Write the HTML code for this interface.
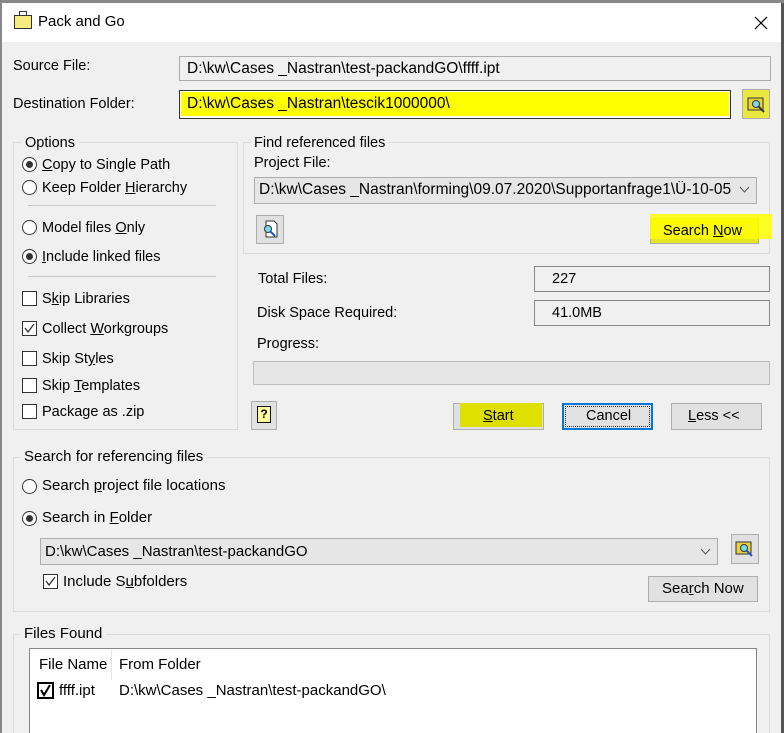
<!DOCTYPE html>
<html><head><meta charset="utf-8"><style>
*{box-sizing:border-box;margin:0;padding:0}
html,body{width:784px;height:733px;overflow:hidden}
body{background:#f0f0f0;font-family:"Liberation Sans",sans-serif;font-size:14.5px;color:#000;position:relative}
.a{position:absolute;white-space:nowrap}
.t{position:absolute;white-space:nowrap;line-height:18px}
.box{position:absolute;border:1px solid #adadad;background:#f0f0f0}
.grp{position:absolute;border:1px solid #dcdcdc}
.btn{position:absolute;border:1px solid #adadad;background:#e1e1e1;text-align:center;line-height:24px}
.rad{position:absolute;width:15px;height:15px;border:1px solid #333;border-radius:50%;background:#fff}
.rad.on::after{content:"";position:absolute;left:3px;top:3px;width:7px;height:7px;border-radius:50%;background:#333}
.chk{position:absolute;width:15px;height:15px;border:1px solid #333;background:#fff}
.sep{position:absolute;height:1px;background:#c8c8c8}
.c{font-size:15px}
.p{font-size:15.5px}
u{text-decoration:underline}
</style></head><body>
<div class="a" style="left:0;top:0;width:784px;height:42px;background:#fff"></div>
<div class="a" style="left:0;top:0;width:2px;height:733px;background:#888"></div>
<div class="a" style="left:781px;top:0;width:3px;height:733px;background:#555"></div>
<div class="a" style="left:0;top:0;width:784px;height:3px;background:#888"></div>
<div class="a" style="left:14px;top:15px;width:18px;height:14px;background:#f5ec80;border:1px solid #333"></div>
<div class="a" style="left:19px;top:11px;width:8px;height:5px;border:1px solid #333;border-bottom:none"></div>
<div class="t" style="left:38px;top:13px;font-size:15px">Pack and Go</div>
<svg class="a" style="left:754px;top:16px" width="14" height="14"><path d="M1 1L13 13M13 1L1 13" stroke="#000" stroke-width="1.2"/></svg>

<div class="t" style="left:13px;top:57px">Source File:</div>
<div class="box" style="left:179px;top:56px;width:592px;height:25px"></div>
<div class="t p" style="left:187px;top:60px">D:\kw\Cases _Nastran\test-packandGO\ffff.ipt</div>
<div class="t" style="left:13px;top:95px">Destination Folder:</div>
<div class="box" style="left:179px;top:90px;width:552px;height:29px;background:#fff;border-color:#333"></div>
<div class="a" style="left:181px;top:92px;width:548px;height:24px;background:#ffff00"></div>
<div class="t p" style="left:187px;top:95px">D:\kw\Cases _Nastran\tescik1000000\</div>
<div class="btn" style="left:742px;top:89px;width:28px;height:30px;background:#e8e840"></div>
<svg class="a" style="left:747px;top:95px" width="20" height="18"><rect x="1" y="3" width="15" height="12" fill="#e8d040" stroke="#333"/><circle cx="9" cy="9" r="3.5" fill="#7de" stroke="#333"/><path d="M11 11L17 17" stroke="#333" stroke-width="2"/></svg>

<div class="grp" style="left:13px;top:142px;width:225px;height:288px"></div>
<div class="t" style="left:22px;top:134px;background:#f0f0f0;padding:0 3px">Options</div>
<div class="rad on" style="left:22px;top:157px"></div><div class="t" style="left:42px;top:156px"><u>C</u>opy to Single Path</div>
<div class="rad" style="left:22px;top:180px"></div><div class="t" style="left:42px;top:179px">Keep Folder <u>H</u>ierarchy</div>
<div class="sep" style="left:28px;top:205px;width:188px"></div>
<div class="rad" style="left:22px;top:220px"></div><div class="t" style="left:42px;top:219px">Model files <u>O</u>nly</div>
<div class="rad on" style="left:22px;top:249px"></div><div class="t" style="left:42px;top:248px"><u>I</u>nclude linked files</div>
<div class="sep" style="left:28px;top:276px;width:188px"></div>
<div class="chk" style="left:22px;top:291px"></div><div class="t" style="left:42px;top:290px">S<u>k</u>ip Libraries</div>
<div class="chk" style="left:22px;top:321px"><svg width="13" height="13" style="position:absolute;left:0;top:0"><path d="M2 6L5 10L11 2" stroke="#333" fill="none" stroke-width="1.3"/></svg></div><div class="t" style="left:42px;top:320px">Collect <u>W</u>orkgroups</div>
<div class="chk" style="left:22px;top:351px"></div><div class="t" style="left:42px;top:350px">Skip St<u>y</u>les</div>
<div class="chk" style="left:22px;top:378px"></div><div class="t" style="left:42px;top:377px">Skip <u>T</u>emplates</div>
<div class="chk" style="left:22px;top:404px"></div><div class="t" style="left:42px;top:403px">Package as .zip</div>

<div class="grp" style="left:243px;top:142px;width:527px;height:112px"></div>
<div class="t" style="left:251px;top:134px;background:#f0f0f0;padding:0 3px">Find referenced files</div>
<div class="t" style="left:254px;top:154px">Project File:</div>
<div class="box" style="left:254px;top:177px;width:503px;height:27px;background:#e6e6e6"></div>
<div class="a p" style="left:259px;top:181px;width:497px;overflow:hidden;line-height:18px">D:\kw\Cases _Nastran\forming\09.07.2020\Supportanfrage1\Ü-10-05</div>
<div class="a" style="left:733px;top:179px;width:23px;height:23px;background:#e6e6e6"></div>
<svg class="a" style="left:739px;top:186px" width="11" height="8"><path d="M1 1L5.5 6L10 1" stroke="#555" fill="none"/></svg>
<div class="btn" style="left:256px;top:215px;width:28px;height:29px"></div>
<svg class="a" style="left:260px;top:219px" width="20" height="20"><path d="M6 2H14L17 5V18H6Z" fill="#fff" stroke="#333"/><circle cx="8" cy="10" r="3.5" fill="#7de" stroke="#333"/><path d="M10 12L15 17" stroke="#2255cc" stroke-width="2"/></svg>
<div class="btn" style="left:650px;top:218px;width:109px;height:26px;background:#e5e520"></div>
<div class="a" style="left:650px;top:214px;width:122px;height:25px;background:#ffff00;opacity:.85"></div>
<div class="t" style="left:663px;top:222px">Search <u>N</u>ow</div>

<div class="t" style="left:258px;top:270px">Total Files:</div>
<div class="box" style="left:534px;top:266px;width:236px;height:26px;border-color:#888"></div>
<div class="t" style="left:552px;top:270px">227</div>
<div class="t" style="left:257px;top:304px">Disk Space Required:</div>
<div class="box" style="left:534px;top:300px;width:236px;height:26px;border-color:#888"></div>
<div class="t" style="left:552px;top:304px">41.0MB</div>
<div class="t" style="left:257px;top:335px">Progress:</div>
<div class="box" style="left:253px;top:361px;width:517px;height:24px;background:#e6e6e6;border-color:#bcbcbc"></div>

<div class="btn" style="left:251px;top:401px;width:26px;height:29px"></div>
<div class="a" style="left:257px;top:406px;width:14px;height:17px;background:#ffffa0;border:1.5px solid #111;font-size:12px;font-weight:bold;text-align:center;line-height:14px">?</div>
<div class="btn" style="left:453px;top:403px;width:91px;height:27px;background:#e0e0e0"></div>
<div class="a" style="left:460px;top:403px;width:82px;height:24px;background:#e0e000"></div>
<div class="t" style="left:483px;top:407px"><u>S</u>tart</div>
<div class="btn" style="left:562px;top:403px;width:91px;height:27px;border:2px solid #0078d7"></div>
<div class="a" style="left:565px;top:406px;width:85px;height:21px;border:1px dotted #333"></div>
<div class="t" style="left:586px;top:407px">Cancel</div>
<div class="btn" style="left:671px;top:403px;width:91px;height:27px"></div>
<div class="t" style="left:688px;top:407px"><u>L</u>ess &lt;&lt;</div>

<div class="grp" style="left:13px;top:457px;width:757px;height:155px"></div>
<div class="t c" style="left:20px;top:448px;background:#f0f0f0;padding:0 4px">Search for referencing files</div>
<div class="rad" style="left:22px;top:479px"></div><div class="t c" style="left:42px;top:477px">Search <u>p</u>roject file locations</div>
<div class="rad on" style="left:22px;top:511px"></div><div class="t c" style="left:42px;top:509px">Search in <u>F</u>older</div>
<div class="box" style="left:40px;top:538px;width:678px;height:27px;background:#e6e6e6"></div>
<div class="t c" style="left:45px;top:543px">D:\kw\Cases _Nastran\test-packandGO</div>
<svg class="a" style="left:700px;top:548px" width="11" height="8"><path d="M1 1L5.5 6L10 1" stroke="#555" fill="none"/></svg>
<div class="btn" style="left:731px;top:534px;width:28px;height:30px"></div>
<svg class="a" style="left:735px;top:539px" width="20" height="20"><rect x="1" y="3" width="15" height="12" fill="#e8d040" stroke="#333"/><circle cx="9" cy="9" r="3.5" fill="#7de" stroke="#333"/><path d="M11 11L17 17" stroke="#2255cc" stroke-width="2"/></svg>
<div class="chk" style="left:43px;top:574px"><svg width="13" height="13" style="position:absolute;left:0;top:0"><path d="M2 6L5 10L11 2" stroke="#333" fill="none" stroke-width="1.3"/></svg></div>
<div class="t c" style="left:63px;top:573px">Include S<u>u</u>bfolders</div>
<div class="btn" style="left:648px;top:576px;width:110px;height:26px"></div>
<div class="t c" style="left:662px;top:580px">Sea<u>r</u>ch Now</div>

<div class="grp" style="left:13px;top:634px;width:757px;height:100px;border-bottom:none"></div>
<div class="t c" style="left:20px;top:625px;background:#f0f0f0;padding:0 4px">Files Found</div>
<div class="box" style="left:29px;top:648px;width:728px;height:86px;background:#fff;border-color:#888;border-bottom:none"></div>
<div class="a" style="left:111px;top:650px;width:1px;height:30px;background:#e5e5e5"></div>
<div class="t c" style="left:39px;top:656px">File Name</div>
<div class="t c" style="left:119px;top:656px">From Folder</div>
<div class="a" style="left:37px;top:682px;width:17px;height:17px;border:2px solid #000;background:#fff"><svg width="13" height="13" style="position:absolute;left:0;top:0"><path d="M2 6L5 11L11 1" stroke="#000" fill="none" stroke-width="2"/></svg></div>
<div class="t c" style="left:59px;top:682px">ffff.ipt</div>
<div class="t c" style="left:119px;top:682px">D:\kw\Cases _Nastran\test-packandGO\</div>
</body></html>
